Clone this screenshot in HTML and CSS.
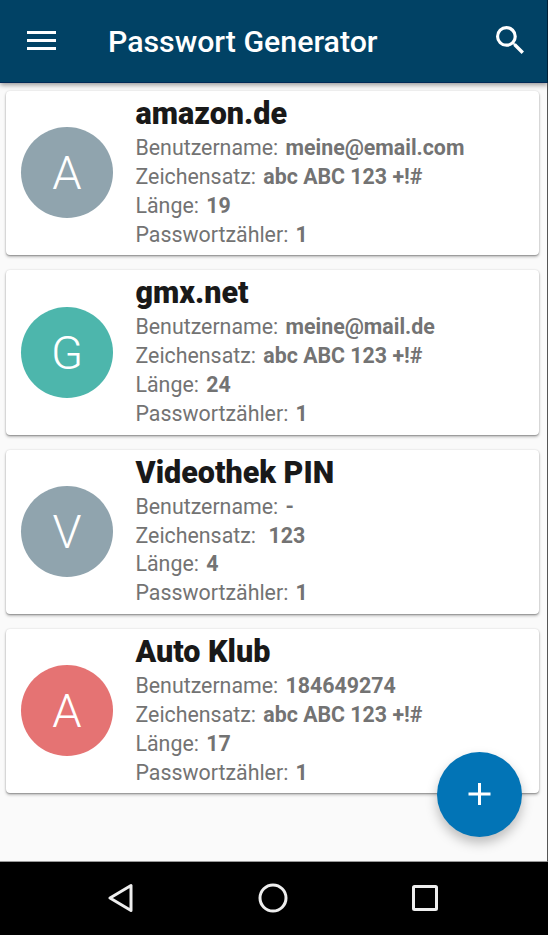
FILE: index.html
```html
<!DOCTYPE html>
<html lang="de">
<head>
<meta charset="utf-8">
<title>Passwort Generator</title>
<link rel="stylesheet" href="styles.css">
</head>
<body>
<div class="screen">
<header class="bar">
<svg class="menu" width="30" height="22" viewBox="0 0 30 22"><path d="M1 1h29v3H1zM1 9h29v3H1zM1 17h29v3H1z" fill="#fff"/></svg>
<h1>Passwort Generator</h1>
<svg class="search" width="28" height="28" viewBox="3 3 17.5 17.5"><path fill="#fff" d="M15.5 14h-.79l-.28-.27A6.47 6.47 0 0 0 16 9.500 6.500 6.500 0 1 0 9.500 16c1.610 0 3.090-.590 4.230-1.570l.27.280v.790l5 4.990L20.490 19l-4.990-5zm-6 0C7.010 14 5 11.990 5 9.500S7.010 5 9.500 5 14 7.010 14 9.500 11.990 14 9.500 14z"/></svg>
</header>
<main>
<article class="card"><div class="avatar gray">A</div><div class="info"><h2>amazon.de</h2><p>Benutzername: <b>meine@email.com</b></p><p>Zeichensatz: <b>abc ABC 123 +!#</b></p><p>Länge: <b>19</b></p><p>Passwortzähler: <b>1</b></p></div></article>
<article class="card"><div class="avatar teal">G</div><div class="info"><h2>gmx.net</h2><p>Benutzername: <b>meine@mail.de</b></p><p>Zeichensatz: <b>abc ABC 123 +!#</b></p><p>Länge: <b>24</b></p><p>Passwortzähler: <b>1</b></p></div></article>
<article class="card"><div class="avatar gray">V</div><div class="info"><h2>Videothek PIN</h2><p>Benutzername: <b>-</b></p><p>Zeichensatz: <b>&nbsp;123</b></p><p>Länge: <b>4</b></p><p>Passwortzähler: <b>1</b></p></div></article>
<article class="card"><div class="avatar red">A</div><div class="info"><h2>Auto Klub</h2><p>Benutzername: <b>184649274</b></p><p>Zeichensatz: <b>abc ABC 123 +!#</b></p><p>Länge: <b>17</b></p><p>Passwortzähler: <b>1</b></p></div></article>
</main>
<button class="fab" aria-label="Neu"><svg width="23" height="23" viewBox="0 0 23 23"><path d="M11.500 0v22M.5 11h22" stroke="#fff" stroke-width="3"/></svg></button>
<nav>
<svg width="26" height="30" viewBox="0 0 26 30"><path d="M23 2.500v25L2 15z" fill="none" stroke="#eee" stroke-width="3" stroke-linejoin="round"/></svg>
<svg width="30" height="30" viewBox="0 0 30 30"><circle cx="15" cy="15" r="13" fill="none" stroke="#eee" stroke-width="3"/></svg>
<svg width="26" height="26" viewBox="0 0 26 26"><rect x="1.500" y="1.500" width="23" height="23" rx="1" fill="none" stroke="#eee" stroke-width="3"/></svg>
</nav>
</div>
</body>
</html>
```
FILE: styles.css
```css
*{box-sizing:border-box}
body{margin:0;font-family:Roboto,"Liberation Sans",sans-serif;background:#fafafa}
.screen{position:relative;width:548px;height:935px;display:flex;flex-direction:column;overflow:hidden}
.bar{height:83px;background:#014265;display:flex;align-items:center;padding:0 23px 0 26px;border-bottom:1px solid #012a58;border-right:1px solid #012238;box-shadow:0 2px 5px rgba(0,0,0,.4);flex:none}
.menu{flex:none}
.search{margin-top:-2px}
.bar h1{margin:2px 0 0 52px;flex:1;color:#fff;font-size:30.300px;font-weight:500;line-height:40px}
main{flex:1;padding:8px 8px 0 6px;display:flex;flex-direction:column;gap:15px;border-right:1px solid #555;border-bottom:1px solid #999}
.card{height:164.300px;flex:none;background:#fff;border-radius:4px;box-shadow:0 1px 1px rgba(0,0,0,.18),0 2px 3px rgba(0,0,0,.25),0 0 2px rgba(0,0,0,.15);display:flex;padding:0 15px}
.avatar{width:92px;height:91px;border-radius:50%;margin-top:36.400px;display:flex;align-items:center;justify-content:center;color:#fff;font-size:47px;font-weight:300;flex:none}
.gray{background:#90a4ae}.teal{background:#4db6ac}.red{background:#e57373}
.info{margin-left:22.500px}
.info h2{margin:4px 0 1px;font-size:30.500px;line-height:38px;font-weight:900;color:#191919}
.info p{margin:0;font-size:21.350px;line-height:28.900px;color:#737373;white-space:nowrap}
.info b{margin-left:2px}
.fab{position:absolute;left:437px;top:752px;width:85px;height:85px;padding:0;border:0;border-radius:50%;background:#0274b6;box-shadow:0 6px 12px rgba(0,0,0,.25);display:flex;align-items:center;justify-content:center}
nav{height:73px;background:#000;display:flex;align-items:center;justify-content:space-between;padding:0 110px 1px 108px;flex:none}
```
